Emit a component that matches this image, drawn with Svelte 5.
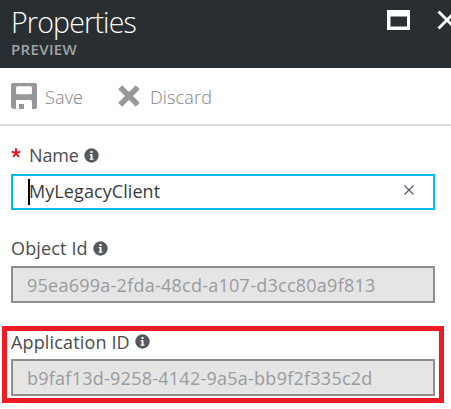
<script>
  let name = $state('MyLegacyClient');
</script>

{#snippet info()}
  <svg class="info" width="15" height="15" viewBox="0 0 15 15">
    <circle cx="7.5" cy="7.5" r="7.2" fill="#55595e" />
    <path d="M6.500 3h2v2h-2zM5.700 6h2.800v4.500h.9v1.200H5.700v-1.200h.9V7.200h-.9z" fill="#fff" />
  </svg>
{/snippet}

<div class="blade">
  <header>
    <div>
      <h1>Properties</h1>
      <div class="preview">PREVIEW</div>
    </div>
    <div class="controls">
      <svg width="23" height="20" viewBox="0 0 23 20">
        <path fill-rule="evenodd" d="M0 0h23v20H0zM3.500 6.500v10h16.500v-10z" fill="#fff" />
      </svg>
      <svg width="20" height="20" viewBox="0 0 20 20">
        <path d="M1.500 1.500l17 17M18.500 1.500l-17 17" stroke="#fff" stroke-width="3" />
      </svg>
    </div>
  </header>

  <div class="toolbar">
    <svg width="26" height="26" viewBox="0 0 26 26">
      <path fill-rule="evenodd" fill="#97989c" d="M2 0h22a2 2 0 0 1 2 2v22a2 2 0 0 1-2 2h-3v-7.500a1.500 1.500 0 0 0-1.500-1.500h-13A1.500 1.500 0 0 0 5 17.500V26H2l-2-2V2a2 2 0 0 1 2-2zM6.500 3.300A1.500 1.500 0 0 0 5 4.800v5a1.500 1.500 0 0 0 1.500 1.500h13a1.500 1.500 0 0 0 1.500-1.500v-5a1.500 1.500 0 0 0-1.500-1.500z" />
      <path d="M8 21h5v5H8z" fill="#97989c" />
    </svg>
    <span class="save">Save</span>
    <svg class="cross" width="22" height="22" viewBox="0 0 22 22">
      <path d="M2.200 2.200l17.600 17.600M19.800 2.200L2.200 19.800" stroke="#97989c" stroke-width="5.600" />
    </svg>
    <span class="discard">Discard</span>
  </div>

  <main>
    <div class="label name">
      <svg class="star" width="10" height="10" viewBox="0 0 10 10">
        <path d="M5 5V.3M5 5L.6 3.700M5 5l4.400-1.300M5 5L2.200 9M5 5l2.800 4" stroke="#e81123" stroke-width="1.900" />
      </svg>
      <span>Name</span>{@render info()}
    </div>
    <div class="field active">
      <i class="caret"></i><span class="value">{name}</span>
      <svg class="clear" width="10" height="10" viewBox="0 0 10 10">
        <path d="M.5.5l9 9M9.500.5l-9 9" stroke="#50536b" stroke-width="1.100" />
      </svg>
    </div>

    <div class="label object"><span>Object Id</span>{@render info()}</div>
    <div class="field disabled"><span>95ea699a-2fda-48cd-a107-d3cc80a9f813</span></div>

    <section class="highlight">
      <div class="label app"><span>Application ID</span>{@render info()}</div>
      <div class="field disabled"><span>b9faf13d-9258-4142-9a5a-bb9f2f335c2d</span></div>
    </section>
  </main>
</div>

<style>
  .blade {
    width: 451px;
    height: 409px;
    overflow: hidden;
    background: #fff;
    font-family: "Open Sans", "Noto Sans", sans-serif;
    font-size: 18px;
    color: #484b4e;
  }
  * { box-sizing: border-box; }
  svg { flex: none; display: block; }
  span { white-space: nowrap; flex: none; }
  header {
    height: 68px;
    padding-left: 11px;
    display: flex;
    justify-content: space-between;
    background: #292e32;
    color: #fff;
  }
  h1 {
    margin: 0;
    padding-top: 2px;
    height: 39px;
    font-size: 28.500px;
    line-height: 40px;
    font-weight: 300;
    letter-spacing: -0.800px;
  }
  .preview {
    font-size: 15px;
    line-height: 20px;
    font-weight: 600;
    letter-spacing: 0.350px;
    color: #a2a4a5;
  }
  .controls {
    display: flex;
    gap: 27px;
    padding-top: 10px;
    margin-right: -6px;
  }
  .toolbar {
    height: 58px;
    padding-left: 11px;
    border-bottom: 2px solid #dcdcdc;
    display: flex;
    align-items: center;
    color: #808286;
    font-weight: 300;
    letter-spacing: 0.150px;
  }
  .save { width: 73px; margin-left: 8px; padding-top: 1px; }
  .discard { margin-left: 10px; padding-top: 1px; }
  main { padding-left: 11px; }
  .label { display: flex; align-items: center; height: 24px; letter-spacing: 0.150px; }
  .name { margin-top: 17px; letter-spacing: -0.150px; }
  .star { margin: -4px 8px 0 0; }
  .info { margin-left: 5px; }
  .field {
    width: 424px;
    height: 37px;
    padding-left: 14px;
    display: flex;
    align-items: center;
    border: 2px solid #8e8e8e;
  }
  .active { height: 36px; margin-top: 7px; padding-left: 15px; border-color: #00bcf2; }
  .value { margin-top: -2px; letter-spacing: 0.080px; color: #383b3e; }
  .disabled { background: #e5e5e5; color: #999b9e; letter-spacing: 0.250px; }
  .caret { width: 2px; height: 26px; margin: -1px -1px 0 0; background: #000; }
  .clear { margin: -4px 19px 0 auto; }
  .object { margin-top: 26px; margin-bottom: 6px; }
  .highlight {
    width: 442px;
    height: 77px;
    margin: 23px 0 0 -9px;
    padding: 0 4px;
    border: 5px solid #ed1c24;
  }
  .app { height: 22px; margin-bottom: 6px; }
  .app .info { margin-top: -1px; }
</style>
